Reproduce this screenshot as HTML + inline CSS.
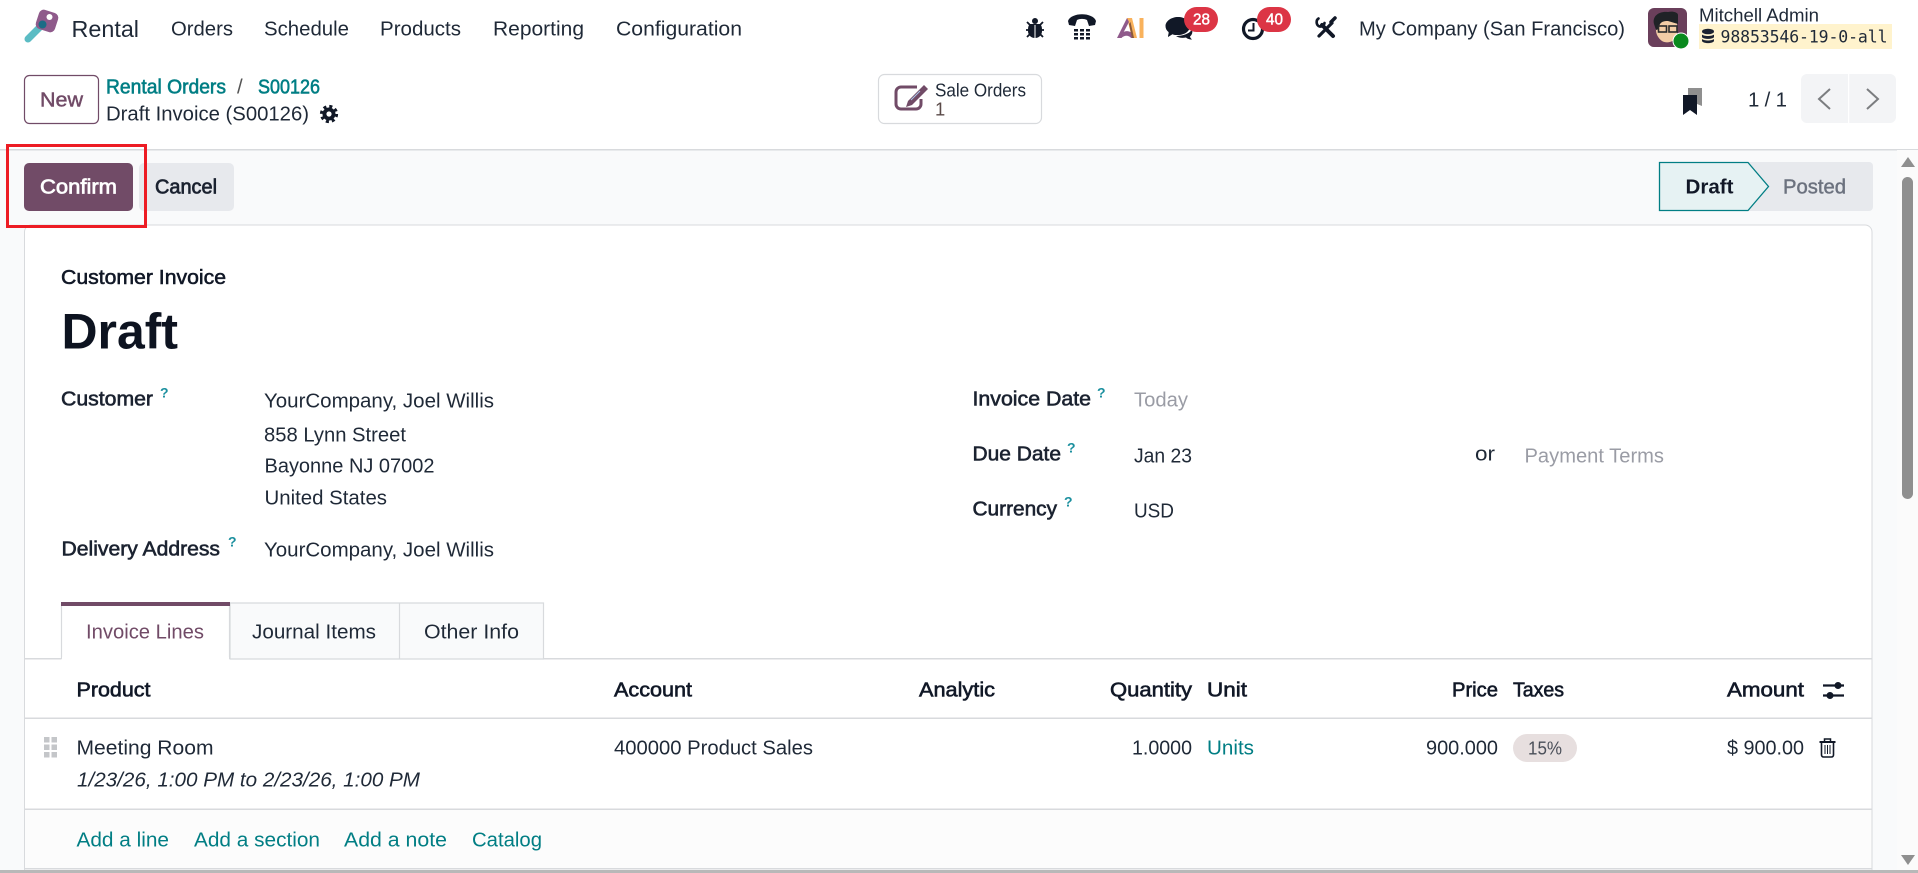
<!DOCTYPE html>
<html lang="en"><head><meta charset="utf-8"><title>Draft Invoice (S00126)</title>
<style>
html,body{margin:0;padding:0;background:#fff;width:1918px;height:873px;overflow:hidden}
svg{display:block;position:absolute;left:0;top:0}
text{font-family:"Liberation Sans",sans-serif;font-size:20.4px;fill:#1f2937;transform:translateY(-.5px)}
.m{stroke:currentColor;stroke-width:.45px}
.b{font-weight:bold;fill:#111827}
.t{fill:#017e84}
.g{fill:#9a9ca5}
.q{font-size:14px;font-weight:bold;fill:#1a8f9e}
.n{fill:#1b2230}
</style></head><body>
<svg width="1918" height="873" viewBox="0 0 1918 873" xmlns="http://www.w3.org/2000/svg">
<!-- backgrounds -->
<rect width="1918" height="873" fill="#fff"/>
<rect x="0" y="149" width="1918" height="724" fill="#f9fafb"/>
<rect x="0" y="149" width="1918" height="1.5" fill="#d8dadd"/>
<rect x="1897" y="150" width="21" height="723" fill="#fbfbfb"/>
<!-- card -->
<path d="M24.500 873V232a7 7 0 0 1 7-7H1865a7 7 0 0 1 7 7V873Z" fill="#fff" stroke="#d8dadd"/>
<rect x="25" y="810" width="1846.500" height="58" fill="#fcfcfc"/>
<rect x="25" y="658" width="1847" height="1.500" fill="#d8dadd"/>
<rect x="25" y="717.500" width="1847" height="1.500" fill="#d8dadd"/>
<rect x="25" y="808.500" width="1847" height="1.500" fill="#d8dadd"/>
<rect x="25" y="868" width="1847" height="1.500" fill="#d8dadd"/>
<rect x="0" y="870" width="1918" height="3" fill="#b8b8b8"/>

<!-- navbar: logo -->
<g>
<path d="M41 26 L28 39" stroke="#5bbcc4" stroke-width="7" stroke-linecap="round"/>
<rect x="37" y="11" width="20" height="20" rx="5" transform="rotate(18 47 21)" fill="#8f5a8b"/>
<circle cx="49.500" cy="17" r="3" fill="#fff"/>
<circle cx="42.500" cy="24.500" r="4" fill="#1c6c86"/>
</g>
<text x="71.500" y="37.500" style="font-size:23px" textLength="67.500" lengthAdjust="spacingAndGlyphs">Rental</text>
<text x="171" y="36" textLength="62" lengthAdjust="spacingAndGlyphs">Orders</text>
<text x="264" y="36" textLength="85" lengthAdjust="spacingAndGlyphs">Schedule</text>
<text x="380" y="36" textLength="81" lengthAdjust="spacingAndGlyphs">Products</text>
<text x="493" y="36" textLength="91" lengthAdjust="spacingAndGlyphs">Reporting</text>
<text x="616" y="36" textLength="126" lengthAdjust="spacingAndGlyphs">Configuration</text>

<!-- bug -->
<g fill="#111827" stroke="#111827">
<circle cx="1035" cy="21" r="3" stroke="none"/>
<path d="M1030 24h10c2 2 2 4 2 7 0 4-3 7-7 7s-7-3-7-7c0-3 0-5 2-7Z" stroke="none"/>
<path d="M1027 22l3 3M1043 22l-3 3M1026 30h4M1044 30h-4M1027 37l3-3M1043 37l-3-3" stroke-width="1.800" fill="none"/>
<path d="M1035 25v13" stroke="#fff" stroke-width="1"/>
</g>
<!-- phone -->
<path d="M1068 21C1071 12 1093 12 1096 21L1095 25 1089 26 1087 20C1084 18.500 1080 18.500 1077 20L1075 26 1069 25Z" fill="#111827"/>
<g fill="#111827">
<rect x="1074" y="29" width="4" height="2.500"/><rect x="1080" y="29" width="4" height="2.500"/><rect x="1086" y="29" width="4" height="2.500"/>
<rect x="1074" y="33" width="4" height="2.500"/><rect x="1080" y="33" width="4" height="2.500"/><rect x="1086" y="33" width="4" height="2.500"/>
<rect x="1074" y="37" width="4" height="2.500"/><rect x="1080" y="37" width="4" height="2.500"/><rect x="1086" y="37" width="4" height="2.500"/>
</g>
<!-- AI -->
<path d="M1127 18H1132L1137 38H1132Z" fill="#f9b25c"/>
<path d="M1127 18L1117 38H1120.500L1129 22Z" fill="#8f5a8b"/>
<path d="M1119 38C1120 32 1127 29 1132 33L1134 38H1131C1129 35 1124 35 1121.500 38Z" fill="#8f5a8b"/>
<path d="M1129 24L1132 38H1134L1130.500 22Z" fill="#8a5a3c"/>
<rect x="1139.500" y="18" width="4" height="20" fill="#f9b25c"/>
<!-- chat -->
<path d="M1178 17c7 0 12 4 12 9s-5 9-12 9c-2 0-4 0-5.500-.800L1168 37c0-2 1-4 .5-5-2-1.500-3-3.500-3-6 0-5 6-9 12.500-9Z" fill="#111827"/>
<path d="M1192 29c1 3 0 6-2 7.500 0 1 1 2 2 3-3 0-5-1-6-2-4 1-8 0-10-1.500 6 0 14-2 16-7Z" fill="#111827"/>
<rect x="1184" y="7" width="34" height="25" rx="12.500" fill="#dc3545"/>
<text x="1193" y="25" style="font-size:15.500px;fill:#fff" color="#fff" textLength="17" lengthAdjust="spacingAndGlyphs" class="m">28</text>
<!-- clock -->
<circle cx="1253" cy="29" r="9.500" fill="none" stroke="#111827" stroke-width="3.200"/>
<path d="M1253.500 23V30.500H1248" fill="none" stroke="#111827" stroke-width="2"/>
<rect x="1257" y="7" width="34" height="25" rx="12.500" fill="#dc3545"/>
<text x="1266" y="25" style="font-size:15.500px;fill:#fff" color="#fff" textLength="17" lengthAdjust="spacingAndGlyphs" class="m">40</text>
<!-- tools -->
<g stroke="#111827" fill="none" stroke-linecap="round">
<path d="M1322 25L1333 36" stroke-width="4"/>
<path d="M1318.500 18.500C1316 20 1316 24 1318.500 26 1321 27.500 1324 26 1324.500 23" stroke-width="2.600"/>
<path d="M1332 23L1319 36" stroke-width="3.200"/>
<path d="M1331 22L1335 18" stroke-width="3.500"/>
</g>
<text x="1359" y="36" textLength="266" lengthAdjust="spacingAndGlyphs">My Company (San Francisco)</text>
<!-- avatar -->
<rect x="1648" y="8" width="39" height="39" rx="6" fill="#6a3f5b"/>
<path d="M1656 30C1655 22 1658 20 1666 20L1677 22 1677 35C1675 42 1667 44 1662 41 1658 38 1656 34 1656 30Z" fill="#f3cda6"/>
<path d="M1654 24C1652 16 1659 11 1668 12 1672 11 1678 12 1678 15L1678 24 1668 21C1663 21 1659 22 1659 29L1656 30Z" fill="#1f2226"/>
<rect x="1658.500" y="26" width="8" height="6" fill="none" stroke="#2b2b2b" stroke-width="1.600"/>
<rect x="1669" y="26" width="8" height="6" fill="none" stroke="#2b2b2b" stroke-width="1.600"/>
<circle cx="1681" cy="41" r="8" fill="#0a8a1e" stroke="#fff" stroke-width="1"/>
<text x="1699" y="22" style="font-size:18.400px" textLength="120" lengthAdjust="spacingAndGlyphs">Mitchell Admin</text>
<rect x="1699" y="24" width="193" height="25" fill="#fff3cd"/>
<g fill="#1b2230">
<ellipse cx="1708" cy="31.500" rx="6" ry="2.800"/>
<path d="M1702 34.500c2 2 10 2 12 0v2.500c-1 2.500-11 2.500-12 0Z"/>
<path d="M1702 39c2 2 10 2 12 0v2c-1 2.800-11 2.800-12 0Z"/>
</g>
<text x="1720.500" y="43" style="font-family:'DejaVu Sans Mono','Liberation Mono',monospace;font-size:16.500px" textLength="167" lengthAdjust="spacing">98853546-19-0-all</text>

<!-- control panel -->
<rect x="24.500" y="75.500" width="74" height="48" rx="5" fill="#fff" stroke="#714b67" stroke-width="1.200"/>
<text x="40" y="107" style="fill:#714b67" color="#714b67" class="m" textLength="43" lengthAdjust="spacingAndGlyphs">New</text>
<text x="106" y="94" class="t m" color="#017e84" style="stroke-width:.6px" textLength="120" lengthAdjust="spacingAndGlyphs">Rental Orders</text>
<text x="237" y="94" style="fill:#555">/</text>
<text x="258" y="94" class="t m" color="#017e84" style="stroke-width:.6px" textLength="62" lengthAdjust="spacingAndGlyphs">S00126</text>
<text x="106" y="121" textLength="203" lengthAdjust="spacingAndGlyphs">Draft Invoice (S00126)</text>
<g>
<circle cx="329" cy="114" r="7.500" fill="none" stroke="#111827" stroke-width="3.200" stroke-dasharray="3 2.900"/>
<circle cx="329" cy="114" r="6.500" fill="#111827"/>
<circle cx="329" cy="114" r="2.600" fill="#fff"/>
</g>
<rect x="878.500" y="74.500" width="163" height="49" rx="6" fill="#fff" stroke="#d8dadd" stroke-width="1.200"/>
<path d="M917 87H901a5 5 0 0 0-5 5V104a5 5 0 0 0 5 5H916a5 5 0 0 0 5-5V99" fill="none" stroke="#714b67" stroke-width="3"/>
<path d="M924 85L928 89 912 105 906 107 908 101Z" fill="#714b67"/>
<path d="M920 91L911 100" stroke="#a9c7e8" stroke-width="1"/>
<text x="935" y="97" style="font-size:18.400px" textLength="91" lengthAdjust="spacingAndGlyphs">Sale Orders</text>
<text x="935" y="116" style="font-size:18.400px;fill:#5a4a48">1</text>
<!-- bookmark -->
<path d="M1688 88H1702V106L1697 104V95H1688Z" fill="#8f8f8f"/>
<path d="M1683 95H1697V115L1690 110 1683 115Z" fill="#111827"/>
<text x="1748" y="107" textLength="39" lengthAdjust="spacing">1 / 1</text>
<rect x="1801" y="74" width="95" height="49" rx="6" fill="#f3f4f6"/>
<rect x="1848" y="74" width="1.200" height="49" fill="#fff"/>
<path d="M1830 89L1819 99 1830 109" fill="none" stroke="#7b7d80" stroke-width="2"/>
<path d="M1867 89L1878 99 1867 109" fill="none" stroke="#7b7d80" stroke-width="2"/>

<!-- action bar -->
<rect x="24" y="163" width="109" height="48" rx="5" fill="#714b67"/>
<text x="40" y="194" style="fill:#fff;stroke-width:.7px" color="#fff" class="m" textLength="77" lengthAdjust="spacingAndGlyphs">Confirm</text>
<rect x="139" y="163" width="95" height="48" rx="5" fill="#e7e9ed"/>
<text x="155" y="194" class="m n" color="#1b2230" style="stroke-width:.7px" textLength="62" lengthAdjust="spacingAndGlyphs">Cancel</text>
<rect x="7.500" y="145.500" width="138" height="81" fill="none" stroke="#ed1c24" stroke-width="3"/>
<!-- status -->
<path d="M1740 162H1869a4 4 0 0 1 4 4V207a4 4 0 0 1-4 4H1740Z" fill="#e7e9ed"/>
<path d="M1659.500 162.500H1748L1768.500 186.500 1748 210.500H1659.500Z" fill="#e6f2f3" stroke="#017e84" stroke-width="1.300"/>
<text x="1685.500" y="194" class="b" textLength="48" lengthAdjust="spacingAndGlyphs">Draft</text>
<text x="1783" y="194" class="m" style="fill:#6c727f" color="#6c727f" textLength="63" lengthAdjust="spacingAndGlyphs">Posted</text>
<!-- scrollbar -->
<path d="M1908 157L1915 167H1901Z" fill="#8f8f8f"/>
<rect x="1902" y="177" width="11" height="322" rx="5.500" fill="#8f8f8f"/>
<path d="M1908 865L1915 855H1901Z" fill="#8f8f8f"/>

<!-- form -->
<text x="61" y="284.500" class="m" color="#111827" style="fill:#111827;stroke-width:.55px" textLength="165" lengthAdjust="spacingAndGlyphs">Customer Invoice</text>
<text x="61.500" y="349" class="b" style="font-size:50px;fill:#0d1320" textLength="116.500" lengthAdjust="spacingAndGlyphs">Draft</text>

<text x="61" y="406" class="m" color="#1b2230" style="fill:#1b2230;stroke-width:.6px" textLength="92" lengthAdjust="spacingAndGlyphs">Customer</text>
<text x="160" y="398" class="q">?</text>
<text x="264" y="408" textLength="230" lengthAdjust="spacingAndGlyphs">YourCompany, Joel Willis</text>
<text x="264" y="442" textLength="142" lengthAdjust="spacingAndGlyphs">858 Lynn Street</text>
<text x="264.500" y="473" textLength="170" lengthAdjust="spacingAndGlyphs">Bayonne NJ 07002</text>
<text x="264.500" y="505" textLength="122.500" lengthAdjust="spacingAndGlyphs">United States</text>
<text x="61.500" y="556" class="m" color="#1b2230" style="fill:#1b2230;stroke-width:.6px" textLength="158.500" lengthAdjust="spacingAndGlyphs">Delivery Address</text>
<text x="228" y="547" class="q">?</text>
<text x="264" y="557" textLength="230" lengthAdjust="spacingAndGlyphs">YourCompany, Joel Willis</text>

<text x="972.500" y="406" class="m" color="#1b2230" style="fill:#1b2230;stroke-width:.6px" textLength="118.500" lengthAdjust="spacingAndGlyphs">Invoice Date</text>
<text x="1097" y="398" class="q">?</text>
<text x="1134" y="407" class="g" textLength="54" lengthAdjust="spacingAndGlyphs">Today</text>
<text x="972.500" y="461" class="m" color="#1b2230" style="fill:#1b2230;stroke-width:.6px" textLength="88.500" lengthAdjust="spacingAndGlyphs">Due Date</text>
<text x="1067" y="453" class="q">?</text>
<text x="1134" y="463" textLength="58" lengthAdjust="spacingAndGlyphs">Jan 23</text>
<text x="1475" y="461" textLength="20" lengthAdjust="spacingAndGlyphs">or</text>
<text x="1524.500" y="463" class="g" textLength="139.500" lengthAdjust="spacingAndGlyphs">Payment Terms</text>
<text x="972.500" y="516" class="m" color="#1b2230" style="fill:#1b2230;stroke-width:.6px" textLength="84.500" lengthAdjust="spacingAndGlyphs">Currency</text>
<text x="1064" y="507" class="q">?</text>
<text x="1134" y="518" textLength="40" lengthAdjust="spacingAndGlyphs">USD</text>

<!-- tabs -->
<path d="M230 659V603H543.500V659Z" fill="#f9fafb" stroke="#d8dadd" stroke-width="1.200"/>
<path d="M399.500 603V659" stroke="#d8dadd" stroke-width="1.200"/>
<path d="M61.500 606V659.500H229.500V606Z" fill="#fff"/>
<path d="M61.500 604V659M229.500 604V659" stroke="#d8dadd" stroke-width="1.200"/>
<rect x="61" y="602" width="169" height="4" fill="#714b67"/>
<rect x="62" y="657" width="167" height="3" fill="#fff"/>
<text x="86" y="639" style="fill:#714b67" textLength="118" lengthAdjust="spacingAndGlyphs">Invoice Lines</text>
<text x="252" y="639" textLength="124" lengthAdjust="spacingAndGlyphs">Journal Items</text>
<text x="424" y="639" textLength="95" lengthAdjust="spacingAndGlyphs">Other Info</text>

<!-- table header -->
<g color="#111827">
<text x="76.500" y="697" class="m" style="fill:#111827;stroke-width:.6px" textLength="74" lengthAdjust="spacingAndGlyphs">Product</text>
<text x="614" y="697" class="m" style="fill:#111827;stroke-width:.6px" textLength="78" lengthAdjust="spacingAndGlyphs">Account</text>
<text x="919" y="697" class="m" style="fill:#111827;stroke-width:.6px" textLength="76" lengthAdjust="spacingAndGlyphs">Analytic</text>
<text x="1110" y="697" class="m" style="fill:#111827;stroke-width:.6px" textLength="82" lengthAdjust="spacingAndGlyphs">Quantity</text>
<text x="1207" y="697" class="m" style="fill:#111827;stroke-width:.6px" textLength="40" lengthAdjust="spacingAndGlyphs">Unit</text>
<text x="1452" y="697" class="m" style="fill:#111827;stroke-width:.6px" textLength="46" lengthAdjust="spacingAndGlyphs">Price</text>
<text x="1513" y="697" class="m" style="fill:#111827;stroke-width:.6px" textLength="51" lengthAdjust="spacingAndGlyphs">Taxes</text>
<text x="1727" y="697" class="m" style="fill:#111827;stroke-width:.6px" textLength="77" lengthAdjust="spacingAndGlyphs">Amount</text>
</g>
<path d="M1823 685.500H1844M1823 695.500H1844" stroke="#111827" stroke-width="2.200"/>
<circle cx="1838" cy="685.500" r="3.500" fill="#111827"/>
<circle cx="1830" cy="695.500" r="3.500" fill="#111827"/>

<!-- row -->
<g fill="#c4c6c9">
<rect x="44" y="737" width="5.500" height="5.500"/><rect x="51.500" y="737" width="5.500" height="5.500"/>
<rect x="44" y="744.500" width="5.500" height="5.500"/><rect x="51.500" y="744.500" width="5.500" height="5.500"/>
<rect x="44" y="752" width="5.500" height="5.500"/><rect x="51.500" y="752" width="5.500" height="5.500"/>
</g>
<text x="76.500" y="755" textLength="137" lengthAdjust="spacingAndGlyphs">Meeting Room</text>
<text x="77" y="787" style="font-style:italic" textLength="343" lengthAdjust="spacingAndGlyphs">1/23/26, 1:00 PM to 2/23/26, 1:00 PM</text>
<text x="614" y="755" textLength="199" lengthAdjust="spacingAndGlyphs">400000 Product Sales</text>
<text x="1132" y="755" textLength="60" lengthAdjust="spacingAndGlyphs">1.0000</text>
<text x="1207" y="755" class="t" textLength="47" lengthAdjust="spacingAndGlyphs">Units</text>
<text x="1426" y="755" textLength="72" lengthAdjust="spacingAndGlyphs">900.000</text>
<rect x="1513" y="734" width="64" height="28" rx="14" fill="#e7dfdf"/>
<text x="1528" y="755" style="font-size:18.400px;fill:#4a4f59" textLength="34" lengthAdjust="spacingAndGlyphs">15%</text>
<text x="1727" y="755" textLength="77" lengthAdjust="spacingAndGlyphs">$ 900.00</text>
<g fill="none" stroke="#111827">
<path d="M1819.500 742H1835.500" stroke-width="2"/>
<path d="M1824.500 741.500V739H1830.500V741.500" stroke-width="1.500"/>
<path d="M1821.500 742.500V755a2 2 0 0 0 2 2H1831.500a2 2 0 0 0 2-2V742.500" stroke-width="1.600"/>
<path d="M1825 745V754M1827.500 745V754M1830 745V754" stroke-width="1"/>
</g>

<!-- footer links -->
<text x="76.500" y="847" class="t" textLength="92.500" lengthAdjust="spacingAndGlyphs">Add a line</text>
<text x="194" y="847" class="t" textLength="126" lengthAdjust="spacingAndGlyphs">Add a section</text>
<text x="344" y="847" class="t" textLength="103" lengthAdjust="spacingAndGlyphs">Add a note</text>
<text x="472" y="847" class="t" textLength="70" lengthAdjust="spacingAndGlyphs">Catalog</text>
</svg>
</body></html>
